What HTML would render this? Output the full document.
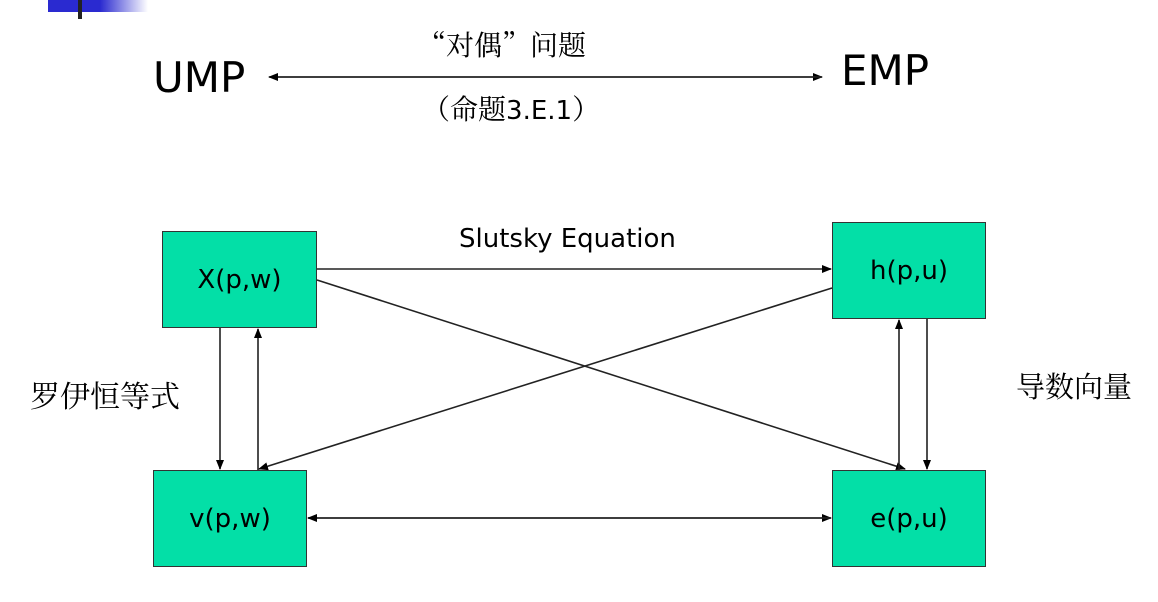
<!DOCTYPE html>
<html><head><meta charset="utf-8"><style>
body{margin:0;width:1158px;height:602px;background:#fff;position:relative;overflow:hidden;font-family:"DejaVu Sans","Liberation Sans",sans-serif;}
.t{position:absolute;white-space:nowrap;color:#000;}
.cj{font-family:"Liberation Serif","Noto Serif CJK SC",serif;}
.q{font-family:"Noto Serif CJK SC",serif;}
.s{font-family:"DejaVu Sans",sans-serif;}
.box{position:absolute;background:#03DFA7;border:1px solid #333;box-sizing:border-box;display:flex;align-items:center;justify-content:center;font-size:26px;}
</style></head><body>
<div style="position:absolute;left:48px;top:0;width:100px;height:12px;background:linear-gradient(90deg,#2a2ad0 0%,#2a2ad0 52%,#fff 100%)"></div>
<div style="position:absolute;left:78px;top:0;width:4px;height:19px;background:#222"></div>
<div class="t" style="left:153px;top:53px;font-size:42px;">UMP</div>
<div class="t" style="left:841px;top:46px;font-size:42px;">EMP</div>
<div class="t cj" style="left:418px;top:24px;font-size:28px;"><span class="q">“对偶”</span>问题</div>
<div class="t cj" style="left:422px;top:88px;font-size:28px;"><span class="q">（</span>命题<span class="s" style="font-size:26px">3.E.1</span><span class="q">）</span></div>
<div class="t" style="left:459px;top:224px;font-size:26px;">Slutsky Equation</div>
<div class="t cj" style="left:30px;top:372px;font-size:30px;">罗伊恒等式</div>
<div class="t cj" style="left:1016px;top:365px;font-size:29px;">导数向量</div>
<div class="box" style="left:162px;top:231px;width:155px;height:97px;">X(p,w)</div>
<div class="box" style="left:832px;top:222px;width:154px;height:97px;">h(p,u)</div>
<div class="box" style="left:153px;top:470px;width:154px;height:97px;">v(p,w)</div>
<div class="box" style="left:832px;top:470px;width:154px;height:97px;">e(p,u)</div>
<svg width="1158" height="602" style="position:absolute;left:0;top:0">
<defs><marker id="a" markerWidth="10" markerHeight="8" refX="9" refY="4" orient="auto" markerUnits="userSpaceOnUse"><path d="M0,0 L10,4 L0,8 z" fill="#000"/></marker></defs>
<g stroke="#222" stroke-width="1.6" fill="none">
<line x1="270" y1="77" x2="822" y2="77" marker-end="url(#a)"/>
<line x1="822" y1="77" x2="269" y2="77" marker-end="url(#a)"/>
<line x1="317" y1="269" x2="831" y2="269" marker-end="url(#a)"/>
<line x1="220" y1="328" x2="220" y2="469" marker-end="url(#a)"/>
<line x1="258" y1="470" x2="258" y2="329" marker-end="url(#a)"/>
<line x1="832" y1="288" x2="259" y2="469" marker-end="url(#a)"/>
<line x1="317" y1="280" x2="905" y2="469" marker-end="url(#a)"/>
<line x1="899" y1="470" x2="899" y2="320" marker-end="url(#a)"/>
<line x1="927" y1="319" x2="927" y2="469" marker-end="url(#a)"/>
<line x1="308" y1="518" x2="831" y2="518" marker-end="url(#a)"/>
<line x1="831" y1="518" x2="308" y2="518" marker-end="url(#a)"/>
</g></svg>
</body></html>
